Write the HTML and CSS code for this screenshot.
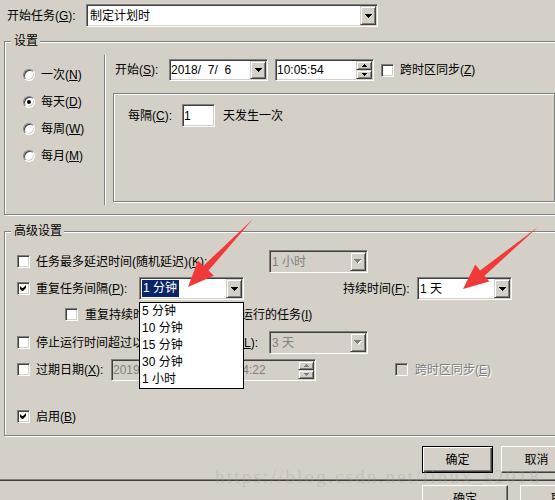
FILE: index.html
```html
<!DOCTYPE html>
<html>
<head>
<meta charset="utf-8">
<link rel="stylesheet" href="styles.css">
</head>
<body>
<div class="dlg">
  <div class="toprow">
    <span class="lbl w-g">开始任务(<u>G</u>):</span>
    <div class="fld combo w-task pad3"><span class="val">制定计划时</span><span class="btn dd"><svg width="7" height="4" viewBox="0 0 7 4"><path d="M0 0h7v1H0zM1 1h5v1H1zM2 2h3v1H2zM3 3h1v1H3z"/></svg></span></div>
  </div>

  <div class="group g-set">
    <div class="legend">设置</div>
    <div class="set-body">
      <div class="radios">
        <div class="rrow"><span class="radio"></span><span class="lbl">一次(<u>N</u>)</span></div>
        <div class="rrow"><span class="radio on"><i></i></span><span class="lbl">每天(<u>D</u>)</span></div>
        <div class="rrow"><span class="radio"></span><span class="lbl">每周(<u>W</u>)</span></div>
        <div class="rrow"><span class="radio"></span><span class="lbl">每月(<u>M</u>)</span></div>
      </div>
      <div class="vsep"></div>
      <div class="set-right">
        <div class="start-row">
          <span class="lbl w-start">开始(<u>S</u>):</span>
          <div class="fld combo w99 h22 pad1"><span class="val">2018/&#8199;7/&#8199;6</span><span class="btn dd"><svg width="7" height="4" viewBox="0 0 7 4"><path d="M0 0h7v1H0zM1 1h5v1H1zM2 2h3v1H2zM3 3h1v1H3z"/></svg></span></div>
          <div class="fld w99 h22 pad1 gap7"><span class="val">10:05:54</span><span class="spin"><span class="btn sb"><svg width="5" height="3" viewBox="0 0 5 3"><path d="M2 0h1v1H2zM1 1h3v1H1zM0 2h5v1H0z"/></svg></span><span class="btn sb"><svg width="5" height="3" viewBox="0 0 5 3"><path d="M0 0h5v1H0zM1 1h3v1H1zM2 2h1v1H2z"/></svg></span></span></div>
          <span class="chk gap7"></span>
          <span class="lbl">跨时区同步(<u>Z</u>)</span>
        </div>
        <div class="inner">
          <div class="every-row">
            <span class="lbl w-every">每隔(<u>C</u>):</span>
            <div class="fld w-num pad1"><span class="val">1</span></div>
            <span class="lbl ml8">天发生一次</span>
          </div>
        </div>
      </div>
    </div>
  </div>

  <div class="group g-adv">
    <div class="legend">高级设置</div>
    <div class="arow r1">
      <span class="chk"></span>
      <span class="lbl w233">任务最多延迟时间(随机延迟)(<u>K</u>):</span>
      <div class="fld combo dis w99"><span class="val">1 小时</span><span class="btn dd"><svg width="8" height="5" viewBox="0 0 8 5"><path fill="#fff" d="M1 1h7v1H1zM2 2h5v1H2zM3 3h3v1H3zM4 4h1v1H4z"/><path fill="#808080" d="M0 0h7v1H0zM1 1h5v1H1zM2 2h3v1H2zM3 3h1v1H3z"/></svg></span></div>
    </div>
    <div class="arow r2">
      <span class="chk"><svg width="7" height="7" viewBox="0 0 7 7"><path d="M6 0v3L3 6H2L0 4V1l2 2h1z"/></svg></span>
      <span class="lbl w103">重复任务间隔(<u>P</u>):</span>
      <div class="fld combo w105"><span class="val"><span class="sel">1 分钟</span></span><span class="btn dd"><svg width="7" height="4" viewBox="0 0 7 4"><path d="M0 0h7v1H0zM1 1h5v1H1zM2 2h3v1H2zM3 3h1v1H3z"/></svg></span></div>
      <span class="lbl w74 ml99">持续时间(<u>F</u>):</span>
      <div class="fld combo w95"><span class="val">1 天</span><span class="btn dd"><svg width="7" height="4" viewBox="0 0 7 4"><path d="M0 0h7v1H0zM1 1h5v1H1zM2 2h3v1H2zM3 3h1v1H3z"/></svg></span></div>
    </div>
    <div class="arow r3">
      <span class="chk gapr7"></span>
      <span class="lbl">重复持续时间结束时停止所有运行的任务(<u>I</u>)</span>
    </div>
    <div class="arow r4">
      <span class="chk"></span>
      <span class="lbl w233">停止运行时间超过以下时间的所有任务(<u>L</u>):</span>
      <div class="fld combo dis w99"><span class="val">3 天</span><span class="btn dd"><svg width="8" height="5" viewBox="0 0 8 5"><path fill="#fff" d="M1 1h7v1H1zM2 2h5v1H2zM3 3h3v1H3zM4 4h1v1H4z"/><path fill="#808080" d="M0 0h7v1H0zM1 1h5v1H1zM2 2h3v1H2zM3 3h1v1H3z"/></svg></span></div>
    </div>
    <div class="arow r5">
      <span class="chk"></span>
      <span class="lbl w75">过期日期(<u>X</u>):</span>
      <div class="fld combo dis w99 h22 pad1"><span class="val">2019/&#8199;7/&#8199;6</span><span class="btn dd"><svg width="7" height="4" viewBox="0 0 7 4"><path fill="#808080" d="M0 0h7v1H0zM1 1h5v1H1zM2 2h3v1H2zM3 3h1v1H3z"/></svg></span></div>
      <div class="fld dis w99 h22 pad1 gap7"><span class="val">10:04:22</span><span class="spin"><span class="btn sb"><svg width="5" height="3" viewBox="0 0 5 3"><path fill="#808080" d="M2 0h1v1H2zM1 1h3v1H1zM0 2h5v1H0z"/></svg></span><span class="btn sb"><svg width="5" height="3" viewBox="0 0 5 3"><path fill="#808080" d="M0 0h5v1H0zM1 1h3v1H1zM2 2h1v1H2z"/></svg></span></span></div>
      <span class="chk dis ml79 gapr7"></span>
      <span class="lbl distext">跨时区同步(<u>E</u>)</span>
    </div>
    <div class="arow r6">
      <span class="chk"><svg width="7" height="7" viewBox="0 0 7 7"><path d="M6 0v3L3 6H2L0 4V1l2 2h1z"/></svg></span>
      <span class="lbl">启用(<u>B</u>)</span>
    </div>
  </div>

  <div class="btnrow">
    <div class="pbtn def">确定</div>
    <div class="pbtn">取消</div>
  </div>

  <div class="hline"></div>

  <div class="btnrow2">
    <div class="pbtn big">确定</div>
    <div class="pbtn big">取消</div>
  </div>
</div>

<div class="droplist">
  <div class="item">5 分钟</div>
  <div class="item">10 分钟</div>
  <div class="item">15 分钟</div>
  <div class="item">30 分钟</div>
  <div class="item">1 小时</div>
</div>

<div class="watermark">https://blog.csdn.net/linux_s2018</div>

<svg class="arrows" width="555" height="500" viewBox="0 0 555 500">
  <polygon points="253,219 208.5,270.6 213.9,275.8 188,287 198,260.6 203.4,265.8" />
  <polygon points="538,227 484.5,275.8 489.3,281.6 463,289 475.3,264.6 480.1,270.4" />
</svg>
</body>
</html>
```

FILE: styles.css
```css
* { box-sizing: border-box; }
html, body { margin: 0; padding: 0; }
body {
  width: 555px;
  height: 500px;
  overflow: hidden;
  position: relative;
  background: #d4d0c8;
  color: #000;
  font-family: "Liberation Sans", "Noto Sans CJK SC", sans-serif;
  font-size: 12px;
  line-height: 14px;
}
u { text-decoration: underline; text-decoration-thickness: 1px; text-underline-offset: 1px; }

.dlg { width: 555px; }

.lbl { flex: none; white-space: nowrap; }
.w-g { width: 79px; }
.w-start { width: 54px; }
.w-every { width: 54px; }
.w233 { width: 233px; }
.w103 { width: 103px; }
.w74 { width: 74px; }
.w75 { width: 75px; }
.ml8 { margin-left: 8px; }
.ml99 { margin-left: 99px; }
.ml79 { margin-left: 79px; }
.gap7 { margin-left: 7px; }

.toprow {
  display: flex;
  align-items: center;
  height: 23px;
  margin-top: 4px;
  padding-left: 7px;
}

/* sunken field */
.fld {
  flex: none;
  display: flex;
  align-items: center;
  height: 23px;
  background: #fff;
  border: 1px solid;
  border-color: #808080 #fff #fff #808080;
  box-shadow: inset 1px 1px 0 #404040, inset -1px -1px 0 #d4d0c8;
  padding-left: 2px;
  white-space: nowrap;
  overflow: hidden;
}
.fld .val { flex: 1; min-width: 0; overflow: hidden; }
.pad3 { padding-left: 3px; }
.pad1 { padding-left: 1px; }
.h22 { height: 22px; }
.w-task { width: 292px; }
.w99 { width: 99px; }
.w105 { width: 105px; }
.w95 { width: 95px; }
.w-num { width: 33px; }
.fld.dis { background: #d4d0c8; color: #808080; }

.sel {
  display: inline-block;
  background: #0a246a;
  color: #fff;
  padding: 0 2px 0 1px;
  line-height: 17px;
  height: 17px;
}

/* raised button */
.btn {
  flex: none;
  background: #d4d0c8;
  border: 1px solid;
  border-color: #d4d0c8 #404040 #404040 #d4d0c8;
  box-shadow: inset 1px 1px 0 #fff, inset -1px -1px 0 #808080;
  display: flex;
  align-items: center;
  justify-content: center;
}
.btn svg { display: block; }
.dd { width: 16px; align-self: stretch; margin: 1px 1px 1px 0; }
.spin {
  flex: none;
  width: 16px;
  align-self: stretch;
  margin: 1px 1px 1px 0;
  display: flex;
  flex-direction: column;
}
.sb { flex: 1; }

/* checkbox */
.chk {
  flex: none;
  width: 13px;
  height: 13px;
  background: #fff;
  border: 1px solid;
  border-color: #808080 #fff #fff #808080;
  box-shadow: inset 1px 1px 0 #404040, inset -1px -1px 0 #d4d0c8;
  margin-right: 6px;
  display: flex;
  align-items: center;
  justify-content: center;
}
.chk svg { display: block; }
.chk.dis { background: #d4d0c8; }
.gapr7 { margin-right: 7px; }
.distext { color: #808080; text-shadow: 1px 1px 0 #fff; }

/* radio */
.radio {
  flex: none;
  width: 12px;
  height: 12px;
  border-radius: 50%;
  background: #fff;
  border: 1px solid;
  border-color: #808080 #fff #fff #808080;
  box-shadow: inset 1px 1px 0 #404040, inset -1px -1px 0 #d4d0c8;
  display: flex;
  align-items: center;
  justify-content: center;
  margin-right: 6px;
}
.radio i { display: block; width: 4px; height: 4px; border-radius: 50%; background: #000; }

/* group boxes */
.group {
  margin-left: 4px;
  width: 556px;
  border: 1px solid #808080;
  box-shadow: inset 1px 1px 0 #fff, 1px 1px 0 #fff;
}
.g-set { margin-top: 14px; height: 174px; }
.g-adv { margin-top: 16px; height: 205px; }
.legend {
  width: max-content;
  margin: -8px 0 0 6px;
  padding: 0 2px 0 3px;
  height: 14px;
  line-height: 14px;
  background: #d4d0c8;
}

.set-body { display: flex; align-items: flex-start; }
.radios { flex: none; width: 99px; padding: 13px 0 0 18px; }
.rrow { display: flex; align-items: center; height: 27px; }
.vsep {
  flex: none;
  width: 2px;
  height: 150px;
  margin-top: 7px;
  border-left: 1px solid #808080;
  border-right: 1px solid #fff;
}
.set-right { flex: 1; }
.start-row {
  display: flex;
  align-items: center;
  height: 22px;
  margin-top: 11px;
  padding-left: 9px;
}
.inner {
  margin: 12px 0 0 7px;
  width: 442px;
  height: 109px;
  border: 1px solid #808080;
  box-shadow: inset 1px 1px 0 #fff, 1px 1px 0 #fff;
  padding: 10px 0 0 14px;
}
.every-row { display: flex; align-items: center; height: 23px; }

/* advanced rows */
.arow { display: flex; align-items: center; height: 23px; padding-left: 12px; }
.r1 { margin-top: 12px; }
.r2 { margin-top: 4px; }
.r3 { margin-top: 3px; padding-left: 60px; }
.r4 { margin-top: 5px; }
.r5 { margin-top: 4px; }
.r6 { margin-top: 24px; }

/* push buttons */
.btnrow { display: flex; gap: 8px; margin-top: 10px; padding-left: 422px; }
.pbtn {
  flex: none;
  width: 71px;
  height: 27px;
  display: flex;
  align-items: center;
  justify-content: center;
  background: #d4d0c8;
  border: 1px solid;
  border-color: #fff #404040 #404040 #fff;
  box-shadow: inset -1px -1px 0 #808080;
}
.pbtn.def {
  border-color: #000;
  box-shadow: inset 1px 1px 0 #fff, inset -1px -1px 0 #404040, inset -2px -2px 0 #808080;
}
.hline {
  margin-top: 6px;
  height: 2px;
  border-top: 1px solid #808080;
  border-bottom: 1px solid #404040;
}
.btnrow2 { display: flex; gap: 12px; margin-top: 4px; padding-left: 422px; }
.pbtn.big { width: 86px; height: 28px; }

/* popup list */
.droplist {
  position: absolute;
  left: 139px;
  top: 302px;
  width: 105px;
  height: 87px;
  background: #fff;
  border: 1px solid #000;
  z-index: 5;
}
.item { height: 17px; line-height: 17px; padding-left: 2px; white-space: nowrap; }

.watermark {
  position: absolute;
  left: 215px;
  top: 466px;
  font-family: "Liberation Serif", serif;
  font-size: 19px;
  line-height: 22px;
  letter-spacing: 2.2px;
  color: rgba(165, 162, 157, 0.35);
  white-space: nowrap;
  z-index: 8;
}

.arrows {
  position: absolute;
  left: 0;
  top: 0;
  z-index: 10;
  fill: #f03a3a;
}
```
